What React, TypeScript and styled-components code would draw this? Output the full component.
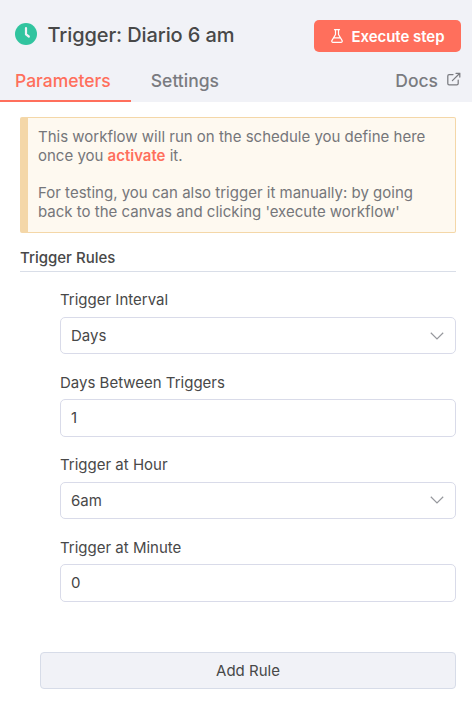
import React from "react";
import styled, { createGlobalStyle } from "styled-components";

const GlobalStyle = createGlobalStyle`
  *, *::before, *::after { box-sizing: border-box; }
  body { margin: 0; background: #fff; }
  button, input { font: inherit; }
`;

const Panel = styled.main`
  width: 472px;
  height: 718px;
  background: #fff;
  color: #484848;
  font-family: Inter, sans-serif;
  font-size: 15px;
  line-height: 19px;
  overflow: hidden;
`;

const Header = styled.header`
  height: 102px;
  background: #f1f2f7;
  display: flex;
  flex-direction: column;
  justify-content: space-between;
`;

const TitleRow = styled.div`
  display: flex;
  align-items: center;
  height: 32px;
  margin-top: 20px;
  padding: 0 11px 0 15px;
`;

const Title = styled.h1`
  flex: 1;
  margin: -2px 0 0 10.5px;
  font-size: 20px;
  line-height: 26px;
  font-weight: 500;
  letter-spacing: -0.1px;
`;

const ClockIcon = styled.svg`
  width: 22px;
  height: 22px;
  margin-top: -4px;
`;

const ExecuteButton = styled.button`
  display: flex;
  align-items: center;
  justify-content: center;
  gap: 9px;
  width: 147px;
  height: 32px;
  padding: 0;
  border: 0;
  border-radius: 5px;
  background: #ff6f5c;
  color: #fff;
  font-size: 15px;
  font-weight: 600;
  letter-spacing: -0.05px;
`;

const Tabs = styled.nav`
  display: flex;
  height: 42px;
`;

const Tab = styled.a<{ $active?: boolean }>`
  display: block;
  padding: 10px 20px 0 ${(p) => (p.$active ? 15 : 20)}px;
  border-bottom: 2px solid ${(p) => (p.$active ? "#ff6f5c" : "transparent")};
  color: ${(p) => (p.$active ? "#ff6f5c" : "#7a7b80")};
  font-size: 17.5px;
  line-height: 22px;
  font-weight: 500;
`;

const DocsLink = styled.a`
  display: flex;
  gap: 9px;
  margin-left: auto;
  padding: 10px 11px 0 0;
  color: #7a7b80;
  font-size: 17.5px;
  line-height: 22px;
  font-weight: 500;
  svg { margin-top: 2px; }
`;

const Content = styled.section`
  padding: 15px 16px 0 20px;
`;

const Notice = styled.div`
  height: 116px;
  padding: 10px 20px 0 10px;
  border: 1px solid #f4d7a8;
  border-left-width: 8px;
  border-radius: 2px;
  background: #fef9f0;
  color: #75767a;
  line-height: 18.75px;
  p { margin: 0 0 18.75px; }
`;

const ActivateLink = styled.a`
  color: #ff6f5c;
  font-weight: 600;
`;

const SectionTitle = styled.h2`
  height: 24px;
  margin: 15px 0 0;
  border-bottom: 1px solid #d9dee8;
  font-size: 15px;
  line-height: 19px;
  font-weight: 500;
`;

const Fields = styled.div`
  display: grid;
  grid-auto-rows: 82.4px;
  margin: 18px 0 0 40px;
`;

const Field = styled.label`
  display: block;
`;

const Label = styled.span<{ $input?: boolean }>`
  display: block;
  height: 27px;
  padding-top: ${(p) => (p.$input ? 1 : 0)}px;
`;

const Control = styled.div<{ $input?: boolean }>`
  display: flex;
  align-items: center;
  justify-content: space-between;
  height: ${(p) => (p.$input ? 38 : 37)}px;
  padding: 0 11px 0 10px;
  border: 1px solid #d9dbe9;
  border-radius: 5px;
`;

const TextInput = styled.input`
  width: 100%;
  padding: 0 0 1px;
  border: 0;
  outline: 0;
  color: #444;
  background: transparent;
`;

const AddButton = styled.button`
  display: block;
  width: 416px;
  height: 37px;
  margin: 32px 0 0 20px;
  padding: 0;
  border: 1px solid #d7dce8;
  border-radius: 4px;
  background: #f1f2f7;
  color: #484848;
`;

function Chevron() {
  return (
    <svg width="14" height="8" viewBox="0 0 14 8" fill="none" stroke="#96989d" strokeWidth="1.2">
      <path d="m.8.8 6.2 6.1L13.2.8" />
    </svg>
  );
}

function SelectField({ label, value }: { label: string; value: string }) {
  return (
    <Field>
      <Label>{label}</Label>
      <Control><span>{value}</span><Chevron /></Control>
    </Field>
  );
}

function InputField({ label, value }: { label: string; value: string }) {
  return (
    <Field>
      <Label $input>{label}</Label>
      <Control $input><TextInput defaultValue={value} /></Control>
    </Field>
  );
}

export default function App() {
  return (
    <Panel>
      <GlobalStyle />
      <Header>
        <TitleRow>
          <ClockIcon viewBox="0 0 22 22">
            <circle cx="11" cy="11" r="11" fill="#31c49f" />
            <path d="M11 5v6.4l2.8 2.1" fill="none" stroke="#f1f2f7" strokeWidth="2.2" strokeLinecap="round" strokeLinejoin="round" />
          </ClockIcon>
          <Title>Trigger: Diario 6 am</Title>
          <ExecuteButton>
            <svg width="12" height="14" viewBox="0 0 12 14" fill="none" stroke="#fff" strokeWidth="1.2" strokeLinecap="round" strokeLinejoin="round">
              <path d="M3.5.7h5M4.5.9v4.6L1 11.4c-.5.9-.1 1.9 1 1.9h8c1.1 0 1.5-1 1-1.9L7.5 5.5V.9M2.7 8.9h6.6" />
            </svg>
            Execute step
          </ExecuteButton>
        </TitleRow>
        <Tabs>
          <Tab $active>Parameters</Tab>
          <Tab>Settings</Tab>
          <DocsLink>
            Docs
            <svg width="14" height="14" viewBox="0 0 14 14" fill="none" stroke="currentColor" strokeWidth="1.25" strokeLinecap="round" strokeLinejoin="round">
              <path d="M9 1.3h3.8v3.8M12.8 1.3 5.4 8.6M6 2.6H2.1C1.4 2.6.8 3.2.8 3.9v7.6c0 .8.6 1.4 1.3 1.4h7.7c.8 0 1.4-.6 1.4-1.4V8" />
            </svg>
          </DocsLink>
        </Tabs>
      </Header>
      <Content>
        <Notice>
          <p>This workflow will run on the schedule you define here once you <ActivateLink>activate</ActivateLink> it.</p>
          <p>For testing, you can also trigger it manually: by going back to the canvas and clicking 'execute workflow'</p>
        </Notice>
        <SectionTitle>Trigger Rules</SectionTitle>
        <Fields>
          <SelectField label="Trigger Interval" value="Days" />
          <InputField label="Days Between Triggers" value="1" />
          <SelectField label="Trigger at Hour" value="6am" />
          <InputField label="Trigger at Minute" value="0" />
        </Fields>
        <AddButton>Add Rule</AddButton>
      </Content>
    </Panel>
  );
}
